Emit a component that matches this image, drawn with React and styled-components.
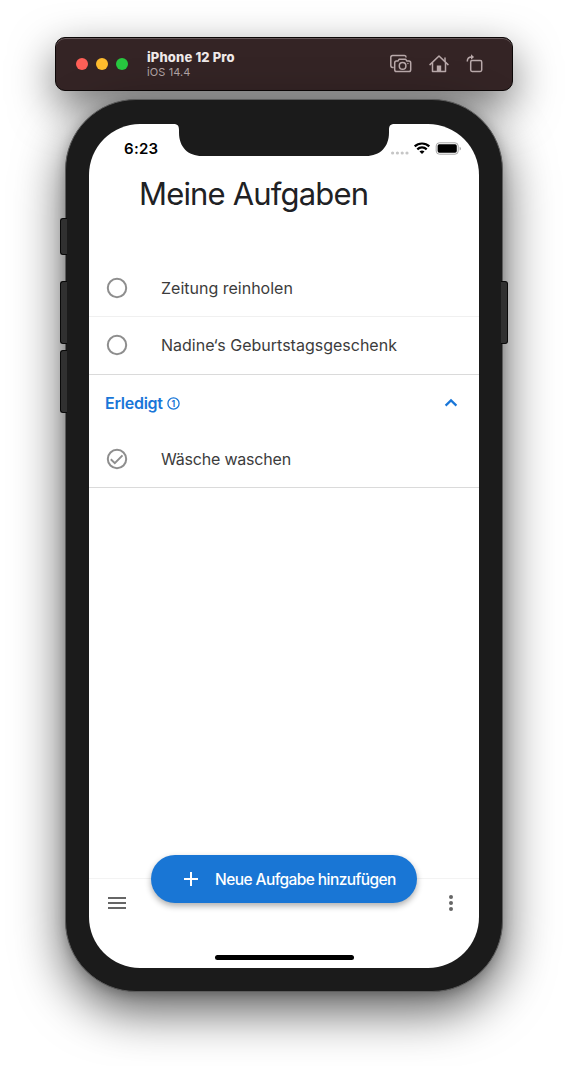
import React from "react";
import styled, { createGlobalStyle } from "styled-components";

const GlobalStyle = createGlobalStyle`
  *, *::before, *::after { box-sizing: border-box; }
  html, body { margin: 0; padding: 0; background: #fff; }
  body { -webkit-font-smoothing: antialiased; }
`;

const googleSans = `"Inter", "Open Sans", "Liberation Sans", sans-serif`;
const systemSans = `"Inter", "Roboto", "Liberation Sans", sans-serif`;

const Desktop = styled.main`
  display: flex;
  flex-direction: column;
  align-items: center;
  gap: 8px;
  height: 1066px;
  padding-top: 37px;
  overflow: hidden;
  background: #fff;
`;

const Toolbar = styled.header`
  display: flex;
  align-items: center;
  flex: none;
  width: 458px;
  height: 54px;
  padding: 0 28px 0 20px;
  border: 1px solid #0c0707;
  border-radius: 10px;
  background: #342425;
  box-shadow: inset 0 1px 0 #665759, 0 16px 44px rgba(0, 0, 0, 0.55);
`;

const TrafficLights = styled.div`
  display: flex;
  gap: 8px;
`;

const Light = styled.span`
  width: 12px;
  height: 12px;
  border-radius: 50%;
  background: ${(p) => p.$color};
`;

const DeviceLabel = styled.div`
  display: flex;
  flex-direction: column;
  flex: 1;
  margin-left: 19px;
  font-family: ${systemSans};
`;

const DeviceName = styled.span`
  font-size: 13px;
  line-height: 15px;
  font-weight: 800;
  letter-spacing: 0.15px;
  color: #efe9e9;
`;

const DeviceOs = styled.span`
  font-size: 11px;
  line-height: 14px;
  letter-spacing: 0.1px;
  color: #b3a5a6;
`;

const ToolbarIcons = styled.div`
  display: flex;
  align-items: center;
  gap: 17px;
  color: #b9a9aa;
`;

const Device = styled.section`
  position: relative;
  flex: none;
  width: 438px;
  height: 893px;
  padding: 24px 23px 23px;
  border: 1px solid #5c5c5c;
  border-radius: 71px;
  background: #1b1b1b;
  box-shadow: 0 18px 50px rgba(0, 0, 0, 0.66), 0 2px 12px rgba(0, 0, 0, 0.2);
`;

const SideButton = styled.span`
  position: absolute;
  ${(p) => p.$side}: -6px;
  top: ${(p) => p.$top}px;
  width: 7px;
  height: ${(p) => p.$height}px;
  border: 1px solid #090909;
  border-${(p) => (p.$side === "left" ? "right" : "left")}: 0;
  border-radius: ${(p) => (p.$side === "left" ? "3px 0 0 3px" : "0 3px 3px 0")};
  background: #303030;
`;

const Screen = styled.div`
  position: relative;
  display: flex;
  flex-direction: column;
  width: 390px;
  height: 844px;
  overflow: hidden;
  border-radius: 51px;
  background: #fff;
`;

const Notch = styled.svg`
  position: absolute;
  top: 0;
  left: 84px;
`;

const StatusBar = styled.div`
  display: flex;
  align-items: center;
  justify-content: space-between;
  flex: none;
  height: 50px;
  padding: 0 18px 0 35px;
`;

const Clock = styled.time`
  font: 600 15px/20px ${systemSans};
  letter-spacing: 0.3px;
  color: #000;
`;

const Title = styled.h1`
  flex: none;
  height: 86px;
  margin: 0;
  padding-left: 50px;
  font: 400 31px/40px ${googleSans};
  letter-spacing: -0.83px;
  color: #202124;
`;

const Task = styled.div`
  display: flex;
  align-items: center;
  flex: none;
  gap: 33px;
  height: ${(p) => p.$height || 57}px;
  padding: 0 0 ${(p) => p.$lift || 0}px 17px;
  border-bottom: ${(p) => (p.$strong ? "1px solid #dadada" : "1px solid #f0f0f0")};
`;

const TaskText = styled.span`
  font: 400 16px/22px ${systemSans};
  letter-spacing: ${(p) => p.$tracking || 0}px;
  white-space: nowrap;
  color: #3c3c3c;
`;

const DoneHeader = styled.div`
  display: flex;
  align-items: center;
  flex: none;
  height: 56px;
  padding: 0 21px 0 16px;
  color: #1976d8;
`;

const DoneLabel = styled.span`
  flex: 1;
  display: flex;
  align-items: center;
  gap: 4px;
  font: 600 16px/22px ${googleSans};
  letter-spacing: -0.25px;
`;

const CountBadge = styled.svg`
  flex: none;
  font: 700 8.5px ${systemSans};
  letter-spacing: 0;
`;

const BottomBar = styled.footer`
  display: flex;
  align-items: flex-start;
  justify-content: space-between;
  height: 90px;
  margin-top: auto;
  padding: 12px 16px 0;
  border-top: 1px solid #f3f3f3;
  color: #666;
`;

const AddButton = styled.button`
  position: absolute;
  left: 62px;
  bottom: 65px;
  display: flex;
  align-items: center;
  gap: 16px;
  width: 266px;
  height: 48px;
  padding: 0 0 0 32px;
  border: 0;
  border-radius: 24px;
  background: #1976d5;
  box-shadow: 0 3px 6px rgba(0, 0, 0, 0.32);
  color: #fff;
  font: 500 15.5px/22px ${googleSans};
  letter-spacing: -0.58px;
  white-space: nowrap;
`;

const AddLabel = styled.span`
  padding-top: 2px;
`;

const HomeIndicator = styled.span`
  position: absolute;
  left: 126px;
  bottom: 8px;
  width: 139px;
  height: 5px;
  border-radius: 3px;
  background: #000;
`;

const ScreenshotIcon = () => (
  <svg width="22" height="20" viewBox="0 0 22 20" fill="none" stroke="currentColor" strokeWidth="1.5">
    <path d="M3.7 13.4H2.6A1.8 1.8 0 0 1 .8 11.600V3.400A1.800 1.800 0 0 1 2.600 1.600h11.800a1.800 1.800 0 0 1 1.700 1.800" />
    <path d="M9.200 5.200h6.400l1.300 1.900h2a1.800 1.800 0 0 1 1.800 1.800v6.800a1.800 1.800 0 0 1-1.800 1.800H6.500a1.800 1.800 0 0 1-1.800-1.800V8.900a1.800 1.800 0 0 1 1.800-1.800h1.400z" strokeLinejoin="round" />
    <circle cx="12.600" cy="11.900" r="3.300" />
    <circle cx="17.900" cy="9.500" r=".7" fill="currentColor" stroke="none" />
  </svg>
);

const HomeIcon = () => (
  <svg width="20" height="20" viewBox="0 0 20 20" fill="none" stroke="currentColor" strokeWidth="1.500">
    <path d="M1 10.600 10 2l9 8.600" strokeLinecap="round" strokeLinejoin="round" />
    <path d="M3.500 9v8.500h13V9M16 7.500V4" strokeLinejoin="round" strokeLinecap="round" />
    <path d="M7.800 17.500v-6h4.400v6z" fill="currentColor" stroke="none" />
  </svg>
);

const RotateIcon = () => (
  <svg width="18" height="20" viewBox="0 0 18 20" fill="none" stroke="currentColor" strokeWidth="1.500">
    <rect x="4.700" y="6.600" width="11" height="10.900" rx="1.400" />
    <path d="M1.300 7.400C1.300 4.300 2.700 3 5.600 3" />
    <path d="M5 .300 8.100 3 5 5.700z" fill="currentColor" stroke="none" />
  </svg>
);

const StatusIcons = () => (
  <svg width="72" height="16" viewBox="0 0 72 16">
    <g fill="#c6c6c6">
      <circle cx="3.600" cy="12" r="1.600" />
      <circle cx="8.400" cy="12" r="1.600" />
      <circle cx="13.200" cy="12" r="1.600" />
      <circle cx="18" cy="12" r="1.600" />
    </g>
    <g fill="none" stroke="#000" strokeWidth="2.200">
      <path d="M25.700 5.400a10.600 10.600 0 0 1 14.600 0" />
      <path d="M28.300 8.400a6.700 6.700 0 0 1 9.400 0" />
    </g>
    <path d="M30.500 10.600a3.700 3.700 0 0 1 5 0L33 13.100z" />
    <rect x="47.200" y="1.800" width="22" height="11.400" rx="3.200" fill="none" stroke="#a6a6a6" />
    <rect x="48.600" y="3.300" width="19.200" height="8.400" rx="1.700" />
    <path d="M70.600 5.700v3.800q1.400-.500 1.400-1.900t-1.400-1.900z" fill="#a6a6a6" />
  </svg>
);

const Circle = ({ done }) => (
  <svg width="22" height="22" viewBox="0 0 22 22" fill="none" stroke="#8e8e8e" strokeWidth="2">
    <circle cx="11" cy="11" r="9.200" />
    {done && <path d="m4.800 11.200 4 3.900 7.700-7.700" />}
  </svg>
);

export default function App() {
  return (
    <>
      <GlobalStyle />
      <Desktop>
        <Toolbar>
          <TrafficLights>
            <Light $color="#ff5f57" />
            <Light $color="#febc2e" />
            <Light $color="#28c840" />
          </TrafficLights>
          <DeviceLabel>
            <DeviceName>iPhone 12 Pro</DeviceName>
            <DeviceOs>iOS 14.4</DeviceOs>
          </DeviceLabel>
          <ToolbarIcons>
            <ScreenshotIcon />
            <HomeIcon />
            <RotateIcon />
          </ToolbarIcons>
        </Toolbar>
        <Device>
          <SideButton $side="left" $top={118} $height={37} />
          <SideButton $side="left" $top={181} $height={63} />
          <SideButton $side="left" $top={250} $height={63} />
          <SideButton $side="right" $top={181} $height={63} />
          <Screen>
            <Notch width="222" height="32" viewBox="0 0 222 32">
              <path
                d="M0 0c4.500 0 6 1.500 6 6v2.500C6 23 15 32 29 32h164c14 0 23-9 23-23.500V6c0-4.500 1.500-6 6-6z"
                fill="#1b1b1b"
              />
            </Notch>
            <StatusBar>
              <Clock>6:23</Clock>
              <StatusIcons />
            </StatusBar>
            <Title>Meine Aufgaben</Title>
            <Task>
              <Circle />
              <TaskText>Zeitung reinholen</TaskText>
            </Task>
            <Task $height={58} $lift={2} $strong>
              <Circle />
              <TaskText>Nadine‘s Geburtstagsgeschenk</TaskText>
            </Task>
            <DoneHeader>
              <DoneLabel>
                Erledigt
                <CountBadge width="13" height="13" viewBox="0 0 13 13">
                  <circle cx="6.500" cy="6.500" r="5.600" fill="none" stroke="currentColor" strokeWidth="1.300" />
                  <text x="6.300" y="9.600" textAnchor="middle" fill="currentColor">1</text>
                </CountBadge>
              </DoneLabel>
              <svg width="14" height="10" viewBox="0 0 14 10" fill="none" stroke="currentColor" strokeWidth="2.2">
                <path d="m1.600 7.600 5.400-5.200 5.400 5.200" />
              </svg>
            </DoneHeader>
            <Task $strong>
              <Circle done />
              <TaskText $tracking={-0.2}>Wäsche waschen</TaskText>
            </Task>
            <BottomBar>
              <svg width="24" height="24" viewBox="0 0 24 24" fill="currentColor">
                <path d="M3 6h18v2H3zM3 11h18v2H3zM3 16h18v2H3z" />
              </svg>
              <svg width="24" height="24" viewBox="0 0 24 24" fill="currentColor">
                <circle cx="12" cy="6" r="2" />
                <circle cx="12" cy="12" r="2" />
                <circle cx="12" cy="18" r="2" />
              </svg>
            </BottomBar>
            <AddButton>
              <svg width="16" height="16" viewBox="0 0 16 16" stroke="currentColor" strokeWidth="2">
                <path d="M8 1v14M1 8h14" />
              </svg>
              <AddLabel>Neue Aufgabe hinzufügen</AddLabel>
            </AddButton>
            <HomeIndicator />
          </Screen>
        </Device>
      </Desktop>
    </>
  );
}
